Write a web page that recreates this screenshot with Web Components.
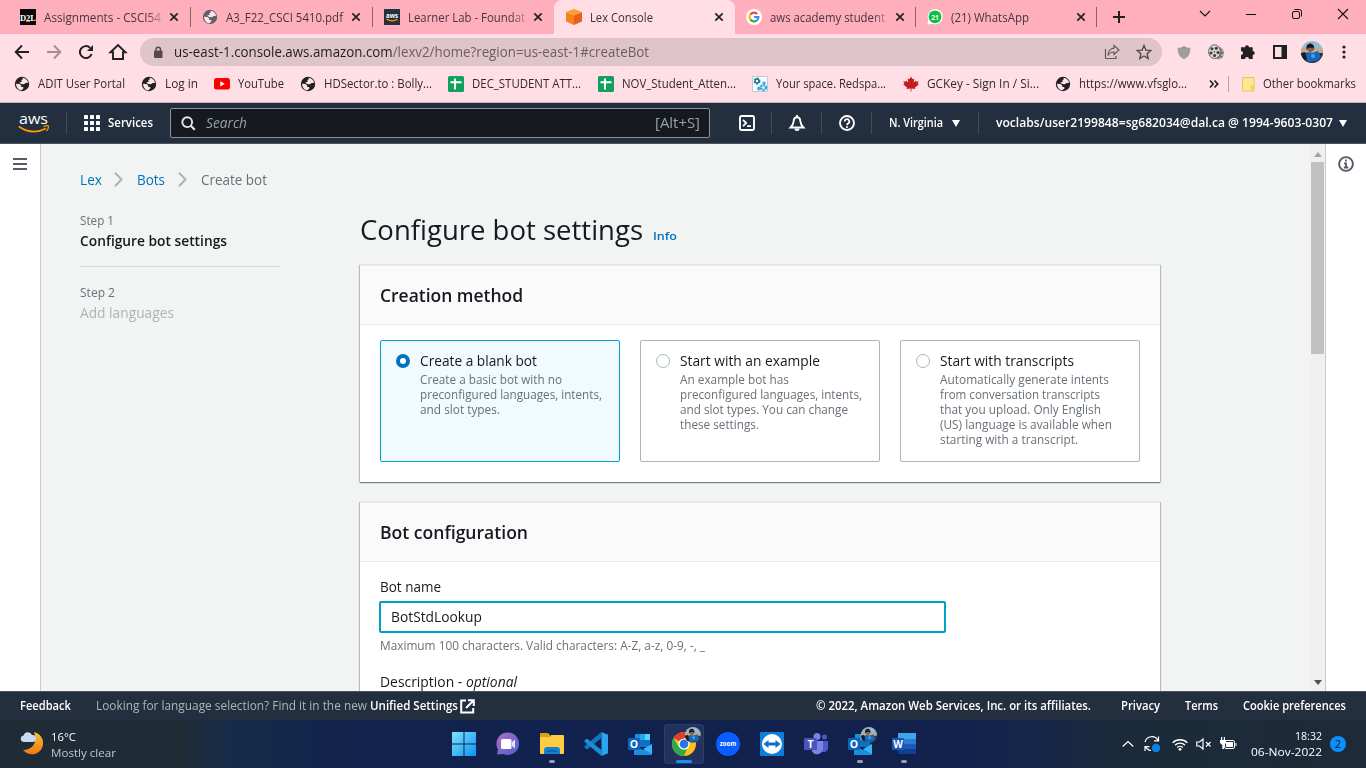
<!DOCTYPE html>
<html lang="en">
<head>
<meta charset="utf-8">
<title>Lex Console</title>
<style>
html,body{margin:0;height:100%;overflow:hidden;font-family:"Open Sans","Noto Sans",sans-serif}
</style>
</head>
<body>
<desktop-screen></desktop-screen>
<script>
const AVATAR = `<clipPath id="c"><circle cx="11" cy="11" r="11"/></clipPath><g clip-path="url(#c)"><rect width="22" height="22" fill="#8dbdd2"/><rect y="7" width="22" height="5" fill="#b8ab98"/><path d="M0 12h22v10H0z" fill="#2b2c30"/><path d="M5.500 8.500c-1-8 8.500-8 7.500 0z" fill="#17181b"/><path d="M6.500 5h6v4l-3 3-3-3z" fill="#8d5f48"/><path d="M5.800 4.800h7v2h-7z" fill="#15171b"/><path d="M6 11l5 1 6-2 3 6-4 4-8 1-5-3z" fill="#1569bd"/><path d="M0 12l4-1 2 7-3 3-3-3z" fill="#1a1c22"/><circle cx="12" cy="15" r="2" fill="#4c9fdc"/></g>`;
const GLOBE = c => `<circle cx="8" cy="8" r="7.200" fill="${c}"/><path d="M8.500 1.800c3.200.5 5 2.200 5.700 5l-2.500.1-1.800 1.400-2.700-.2-2-1.500 2.500-.9-.3-1.600 1.500-.8zM2 7.700l3.600.2 1.600 1.500-.2 1.300 1.900.4.800 1-2.200 2.200C4.300 14 2.200 11.500 2 7.700z" fill="#ffe3e8"/>`;
/* name: [width, height, viewBox, markup] */
const ICONS = {
 d2l:[16,16,'0 0 16 16','<rect width="16" height="16" fill="#0a0a0a"/><text x="0" y="11.500" font-family="Liberation Serif" font-weight="bold" font-size="8.500" textLength="16" lengthAdjust="spacingAndGlyphs" fill="#fff">D2L</text><path d="M6 12.500h4" stroke="#d9732c"/>'],
 globegray:[16,16,'0 0 16 16',GLOBE('#5f6368')],
 globe:[16,16,'0 0 16 16',GLOBE('#202124')],
 awsfav:[16,16,'0 0 16 16','<rect width="16" height="16" fill="#252f3e"/><text x="2" y="8.500" font-family="Open Sans" font-weight="bold" font-size="6.500" textLength="12" lengthAdjust="spacingAndGlyphs" fill="#fff">aws</text><path d="M2.500 10q5.500 3.500 11 .3" fill="none" stroke="#f90" stroke-width="1.200"/>'],
 lex:[16,16,'0 0 16 16','<path d="M8 0l8 3-8 3.500L0 3z" fill="#ff9d2d"/><path d="M0 3l8 3.500V16l-8-3.500z" fill="#f58220"/><path d="M16 3L8 6.500V16l8-3.500z" fill="#e8611c"/>'],
 google:[16,16,'0 0 16 16','<circle cx="8" cy="8" r="8" fill="#fff"/><g fill="none" stroke-width="2.200"><path d="M4.400 5.500A4.400 4.400 0 0 1 11.200 4.900" stroke="#ea4335"/><path d="M4.400 10.500A4.600 4.600 0 0 1 4.400 5.500" stroke="#fbbc05"/><path d="M11 11.200A4.400 4.400 0 0 1 4.400 10.500" stroke="#34a853"/><path d="M8 8h4.400a4.400 4.400 0 0 1-1.400 3.200" stroke="#4285f4"/></g>'],
 whats:[16,16,'0 0 17 17','<path d="M.5 16.500l1-5A8 8 0 1 1 6 15.600z" fill="#fff"/><circle cx="8.500" cy="8.300" r="6.800" fill="#0cc143"/><text x="4.500" y="11.200" font-family="Open Sans" font-weight="bold" font-size="7.500" textLength="8" lengthAdjust="spacingAndGlyphs" fill="#fff">21</text>'],
 tabx:[10,10,'0 0 10 10','<path d="M1.300 1.300l7.400 7.400M8.700 1.300L1.300 8.700" stroke="#202124" stroke-width="1.700"/>'],
 plus:[14,14,'0 0 14 14','<path d="M7 1v12M1 7h12" stroke="#202124" stroke-width="2"/>'],
 wchev:[12,8,'0 0 12 8','<path d="M1 1l5 5 5-5" fill="none" stroke="#111" stroke-width="1.100"/>'],
 wmin:[10,10,'0 0 10 10','<path d="M0 5.500h10" stroke="#111"/>'],
 wmax:[12,12,'0 0 12 12','<rect x="1.500" y="3.500" width="7" height="7" rx="1.500" fill="none" stroke="#111"/><path d="M3.500 1.500h5a2 2 0 0 1 2 2v5" fill="none" stroke="#111"/>'],
 wx:[12,12,'0 0 12 12','<path d="M1 1l10 10M11 1L1 11" stroke="#111" stroke-width="1.100"/>'],
 back:[16,16,'0 0 16 16','<path d="M15 8H2M8 1.500L1.700 8 8 14.500" fill="none" stroke="#202124" stroke-width="1.900"/>'],
 fwd:[16,16,'0 0 16 16','<path d="M1 8h13M8 1.500L14.300 8 8 14.500" fill="none" stroke="#a58e94" stroke-width="1.900"/>'],
 reload:[16,16,'0 0 16 16','<path d="M13.600 10A6 6 0 1 1 12 3.700" fill="none" stroke="#202124" stroke-width="2"/><path d="M15 1v6H9z" fill="#202124"/>'],
 home:[18,18,'0 0 18 18','<path d="M1.500 9.300L9 2l7.500 7.300H14V16H4V9.300z" fill="none" stroke="#202124" stroke-width="1.900"/>'],
 lock:[10,13,'0 0 10 13','<rect x="1" y="4.500" width="8.500" height="7.500" rx="1" fill="#55494d"/><path d="M3 5V3.500a2.200 2.200 0 0 1 4.500 0V5" fill="none" stroke="#55494d" stroke-width="1.400"/>'],
 share:[16,16,'0 0 16 16','<path d="M1.500 5v9.500H12V12" fill="none" stroke="#66585c" stroke-width="1.200"/><path d="M10 1.500L15 6l-5 4.500V8C7 8 5.300 9 4 11.500c0-4 2.500-7 6-7.300z" fill="none" stroke="#66585c" stroke-width="1.200"/>'],
 star:[16,16,'0 0 16 16','<path d="M8 1.600l1.900 4.500 4.900.4-3.700 3.200 1.100 4.800L8 12l-4.200 2.500 1.100-4.800L1.200 6.500l4.900-.4z" fill="none" stroke="#55494d" stroke-width="1.400"/>'],
 shield:[14,15,'0 0 14 15','<path d="M7 .8C9 2.500 11 2.800 13.300 2.800c.2 5.500-1.500 9-6.300 11.500C2.200 11.800.5 8.300.7 2.800 3 2.800 5 2.500 7 .8z" fill="#a39c9e"/>'],
 reel:[16,16,'0 0 16 16','<ellipse cx="11" cy="9" rx="4.800" ry="6.300" fill="#777"/><path d="M12 2.500l2.500 3M13.500 7h2M13 11h2.500M11 14.500l2-.5" stroke="#ddd"/><ellipse cx="6.500" cy="7.700" rx="5.900" ry="6.900" fill="#d9d9d9" stroke="#666"/><g fill="#3a3a3a"><circle cx="4" cy="4.800" r="1.500"/><circle cx="8.300" cy="4.300" r="1.500"/><circle cx="10" cy="8.500" r="1.500"/><circle cx="3" cy="9" r="1.500"/><circle cx="6.600" cy="11.600" r="1.500"/><circle cx="6.400" cy="7.700" r=".8"/></g>'],
 puzzle:[16,16,'0 0 16 16','<path d="M5 3.300a2 2 0 0 1 4 0h3.700V7a2 2 0 0 1 0 4v4H9a2 2 0 0 0-4 0H1v-4a2 2 0 0 0 0-4V3.300z" fill="#202124"/>'],
 panel:[14,14,'0 0 14 14','<path d="M1 1h12v12H1z" fill="none" stroke="#202124" stroke-width="2"/><path d="M8.500 1H13v12H8.500z" fill="#202124"/>'],
 avatar:[22,22,'0 0 22 22',AVATAR],
 dots:[4,14,'0 0 4 14','<circle cx="2" cy="2" r="1.600" fill="#202124"/><circle cx="2" cy="7" r="1.600" fill="#202124"/><circle cx="2" cy="12" r="1.600" fill="#202124"/>'],
 yt:[16,12,'0 0 16 12','<rect width="16" height="11.500" rx="2.500" fill="#f00"/><path d="M6.300 3.200v5.200l4.500-2.600z" fill="#fff"/>'],
 sheets:[16,16,'0 0 16 16','<rect width="16" height="16" rx="1.500" fill="#12a05c"/><path d="M7 2.500v11M2.500 6.300h11" stroke="#fff" stroke-width="2"/>'],
 redspace:[16,16,'0 0 16 16','<rect x=".5" y=".5" width="15" height="15" fill="#f6fbfd" stroke="#c3cbcf"/><circle cx="5" cy="5" r="2.300" fill="none" stroke="#1d7f9c" stroke-width="2.200" stroke-dasharray="1.600 .8"/><circle cx="5" cy="5" r="2" fill="none" stroke="#1d7f9c" stroke-width="1.300"/><circle cx="11.500" cy="11.500" r="2.500" fill="none" stroke="#39a9dc" stroke-width="2.500" stroke-dasharray="2 .7"/><circle cx="7" cy="12.500" r="2" fill="#47b0df"/><circle cx="12" cy="7" r="1.600" fill="#39a9dc"/>'],
 maple:[16,16,'0 0 16 16','<path d="M8 .5l1.600 2.800 1.700-.8-.6 4 2.200-2 .5 1.200 2.300-.4-1 2.500 1 .8-3.700 3 .4 1.400-4-.5V15.500h-.8v-3l-4 .5.400-1.400-3.700-3 1-.8-1-2.500 2.300.4.500-1.200 2.200 2-.6-4 1.700.8z" fill="#c41c1f"/>'],
 more:[10,10,'0 0 10 10','<path d="M1 1.500L4.200 5 1 8.500M5.500 1.500L8.700 5 5.500 8.500" fill="none" stroke="#202124" stroke-width="1.700"/>'],
 folder:[13,15,'0 0 13 15','<path d="M.5.500h11.500v9.500L9.500 14H.5z" fill="#ffe694" stroke="#e9c84e"/><path d="M9.500 9.500h2.500V14H9.500z" fill="#ffe075" stroke="#e9c84e"/>'],
 awslogo:[32,20,'0 0 32 20','<text x="1" y="11" font-family="Open Sans" font-weight="500" font-size="15" textLength="29" lengthAdjust="spacingAndGlyphs" fill="#fff">aws</text><path d="M.8 13.500Q14 22.500 28 15.500" fill="none" stroke="#f90" stroke-width="1.800"/><path d="M25.500 13.300q5-1.500 5 .2 0 2.500-2 4.500" fill="none" stroke="#f90" stroke-width="1.300"/>'],
 grid:[16,16,'0 0 16 16',[0,6,12].map(y=>[0,6,12].map(x=>`<rect x="${x}" y="${y}" width="4" height="4" rx=".6" fill="#fff"/>`).join('')).join('')],
 search:[15,15,'0 0 15 15','<circle cx="6.200" cy="6.200" r="4.900" fill="none" stroke="#e4e8e8" stroke-width="1.900"/><path d="M9.800 9.800l4 4" stroke="#e4e8e8" stroke-width="2.200"/>'],
 shell:[16,16,'0 0 16 16','<rect x="1" y="1" width="14" height="14" rx="1.500" fill="none" stroke="#fff" stroke-width="1.900"/><path d="M4 4.800L7.200 8 4 11.200M8 11.200h4" fill="none" stroke="#fff" stroke-width="1.800"/>'],
 bell:[16,17,'0 0 16 17','<path d="M8 0v2M1.600 12.500C3.500 10.500 4.500 9 4.700 6c.2-2.400 1.500-3.700 3.300-3.700S11.100 3.600 11.300 6c.2 3 1.200 4.500 3.100 6.500z" fill="none" stroke="#fff" stroke-width="1.900"/><path d="M5.500 13.500a2.500 2.500 0 0 0 5 0z" fill="#fff"/>'],
 help:[16,16,'0 0 16 16','<circle cx="8" cy="8" r="7" fill="none" stroke="#fff" stroke-width="1.900"/><path d="M5.700 6.500a2.300 2.300 0 1 1 3.400 2C8.300 9 8 9.300 8 10.200M8 11.200v1.700" fill="none" stroke="#fff" stroke-width="1.700"/>'],
 tri:[8,7,'0 0 8 7','<path d="M0 0h8L4 7z" fill="#fff"/>'],
 burger:[14,13,'0 0 14 13','<path d="M0 1h14M0 6h14M0 11h14" stroke="#545b64" stroke-width="2"/>'],
 info:[16,16,'0 0 16 16','<circle cx="8" cy="8" r="6.900" fill="none" stroke="#545b64" stroke-width="1.900"/><path d="M8 3.500v2M6 7.300h2v4M5.800 11.500h4.500" fill="none" stroke="#545b64" stroke-width="1.800"/>'],
 crumb:[9,15,'0 0 9 15','<path d="M1 .8l6.500 6.700L1 14.200" fill="none" stroke="#aab7b8" stroke-width="2"/>'],
 ext:[15,15,'0 0 15 15','<path d="M6 1.500H1.200v12h12V9" fill="none" stroke="#fff" stroke-width="2"/><path d="M8 1.200h5.800V7M13.500 1.500L6 9" fill="none" stroke="#fff" stroke-width="2"/>'],
 up:[8,5,'0 0 8 5','<path d="M0 5l4-5 4 5z" fill="#a3a3a3"/>'],
 down:[8,5,'0 0 8 5','<path d="M0 0h8L4 5z" fill="#505050"/>'],
 weather:[24,28,'0 0 24 28','<defs><linearGradient id="m" x2="0" y2="1"><stop stop-color="#fbc02d"/><stop offset="1" stop-color="#f07818"/></linearGradient></defs><path d="M14 2c8 2 11 10 8 16-4 8-14 8-19 2 9 0 15-7 11-18z" fill="url(#m)"/><path d="M3.500 12a3.300 3.300 0 0 1 0-6.500A4.500 4.500 0 0 1 12 5a3.500 3.500 0 0 1 1 7z" fill="#c9daf6"/>'],
 win:[24,24,'0 0 24 24','<defs><linearGradient id="w" x2="1" y2="1"><stop stop-color="#7fe3fb"/><stop offset="1" stop-color="#0a93f5"/></linearGradient></defs><path d="M0 0h11.500v11.500H0zM12.500 0H24v11.500H12.500zM0 12.500h11.500V24H0zM12.500 12.500H24V24H12.500z" fill="url(#w)"/>'],
 chat:[24,24,'0 0 24 24','<defs><linearGradient id="h" x2="1" y2="1"><stop stop-color="#b06fc0"/><stop offset="1" stop-color="#4b5fd3"/></linearGradient></defs><path d="M1 22.500l1-5A11.300 11.300 0 1 1 7 22z" fill="url(#h)"/><rect x="5" y="7" width="10.500" height="10" rx="1.500" fill="#fff"/><path d="M16 10l3-2.500v9L16 14z" fill="#e6e0fa"/>'],
 files:[24,24,'0 0 24 24','<path d="M0 2a1 1 0 0 1 1-1h7l2 2v3H0z" fill="#e0a20c"/><path d="M0 5h10l1-2h12a1 1 0 0 1 1 1v17a1 1 0 0 1-1 1H1a1 1 0 0 1-1-1z" fill="#fdcc42"/><path d="M4 22v-4a3 3 0 0 1 3-3h10a3 3 0 0 1 3 3v4z" fill="#1483cf"/><path d="M7 19h10" stroke="#0b61a4" stroke-width="1.500"/>'],
 code:[24,24,'0 0 24 24','<path d="M17.500 0L24 2.800v18.400L17.500 24z" fill="#2aa5ef"/><path d="M17.500 0v6L3 17.500.5 15.800v-1.500z" fill="#1277c0"/><path d="M17.500 24v-6L3 6.500.5 8.200v1.500z" fill="#1b8ed8"/>'],
 outlook:[24,24,'0 0 24 24','<path d="M7 2h15v13H7z" fill="#1490df"/><path d="M12 2h5v6h-5z" fill="#28a8ea"/><path d="M17 2h5v6h-5z" fill="#50d9ff"/><path d="M7 8h15v7H7z" fill="#0f6fc5"/><path d="M6 13l9 5 9-6v10a1 1 0 0 1-1 1H6z" fill="#1a8fe0"/><path d="M24 12v10l-9-5z" fill="#35b5f1"/><rect y="6" width="12" height="12" rx="1" fill="#0a64bb"/><text x="6" y="15.800" text-anchor="middle" font-family="Open Sans" font-weight="bold" font-size="10.500" fill="#fff">O</text>'],
 chrome:[24,24,'0 0 24 24','<circle cx="12" cy="12" r="12" fill="#fbc116"/><path d="M12 12L1.600 6A12 12 0 0 1 22.400 6H12z" fill="#e33b2e"/><path d="M12 24A12 12 0 0 1 1.600 6l5.200 9L12 18l3-1z" fill="#2da94f"/><circle cx="12" cy="12" r="5.600" fill="#fff"/><circle cx="12" cy="12" r="4.400" fill="#2b74e8"/>'],
 zoom:[24,24,'0 0 24 24','<circle cx="12" cy="12" r="12" fill="#0b5cff"/><text x="3.800" y="14" font-family="Open Sans" font-weight="bold" font-size="7" textLength="16.500" lengthAdjust="spacingAndGlyphs" fill="#fff">zoom</text>'],
 tv:[24,24,'0 0 24 24','<rect width="24" height="24" rx="1" fill="#0e7dda"/><circle cx="12" cy="12" r="10" fill="#fff"/><path d="M3.500 12l5-4v2.500h7V8l5 4-5 4v-2.500h-7V16z" fill="#0e6fcb"/>'],
 teams:[24,24,'0 0 24 24','<circle cx="20.500" cy="5" r="2.500" fill="#5059c9"/><circle cx="13" cy="4.500" r="3.500" fill="#7b83eb"/><path d="M16 9h8v7a4 4 0 0 1-6 3.500z" fill="#5059c9"/><path d="M8 9h11v7.500a6 6 0 0 1-11 3z" fill="#7b83eb"/><rect y="6" width="13" height="12" rx="1" fill="#4b53bc"/><text x="6.500" y="15.800" text-anchor="middle" font-family="Open Sans" font-weight="bold" font-size="10.500" fill="#fff">T</text>'],
 word:[24,24,'0 0 24 24','<path d="M6 1h18v6H6z" fill="#41a5ee"/><path d="M6 7h18v5H6z" fill="#2b7cd3"/><path d="M6 12h18v5H6z" fill="#185abd"/><path d="M6 17h18v5H6z" fill="#103f91"/><rect y="6" width="12" height="12" rx="1" fill="#1b57b5"/><text x="6" y="15.800" text-anchor="middle" font-family="Open Sans" font-weight="bold" font-size="10" fill="#fff">W</text>'],
 tup:[12,8,'0 0 12 8','<path d="M.7 6.500L6 1.500l5.300 5" fill="none" stroke="#fff" stroke-width="1.200"/>'],
 sync:[18,18,'0 0 18 18','<path d="M2 7a7 7 0 0 1 13-1.500M15.500 1.500v4.300H11M8 15.500a7 7 0 0 1-5.500-4M2 16v-4.300h4.500" fill="none" stroke="#fff" stroke-width="1.200"/><circle cx="13" cy="13" r="4.200" fill="#0c82e4"/>'],
 wifi:[16,13,'0 0 16 13','<g fill="none" stroke="#fff" stroke-width="1.300"><path d="M.6 4.800a10.500 10.500 0 0 1 14.800 0M3 7.300a7 7 0 0 1 10 0M5.200 9.500a4 4 0 0 1 5.600 0"/></g><circle cx="8" cy="11.300" r="1.400" fill="#fff"/>'],
 mute:[16,12,'0 0 16 12','<path d="M.8 4h2.700L7 1v10L3.500 8H.8z" fill="none" stroke="#fff" stroke-width="1.200"/><path d="M10 4l4.500 4.500M14.500 4L10 8.500" stroke="#fff" stroke-width="1.200"/>'],
 batt:[17,14,'0 0 17 14','<rect x="4.500" y="3.500" width="10" height="8" rx="1.500" fill="#1d2b38" stroke="#fff"/><path d="M6 5h7v5H6zM15.500 6h1v3h-1z" fill="#fff"/><path d="M0 3h6v2.500a3 3 0 0 1-2 2.300V12H2.300V7.800A3 3 0 0 1 0 5.500zM1 0h1.200v3H1zM3.800 0H5v3H3.800z" fill="#fff"/>']
};
const define = (tag, markup) => customElements.define(tag, class extends HTMLElement {
  constructor(){ super(); const t=document.createElement('template'); t.innerHTML=markup; this.attachShadow({mode:'open'}).append(t.content.cloneNode(true)); }
});

/* svg icon by name */
customElements.define('ui-icon', class extends HTMLElement {
  connectedCallback(){
    if(this.shadowRoot) return;
    const [w,h,v,m]=ICONS[this.getAttribute('name')];
    const s=+(this.getAttribute('scale')||1);
    this.attachShadow({mode:'open'}).innerHTML=`<style>:host{display:block;flex:none;width:${w*s}px;height:${h*s}px}svg{display:block;overflow:visible}</style><svg width="${w*s}" height="${h*s}" viewBox="${v}">${m}</svg>`;
  }
});

/* one line of text, condensed to the given width */
customElements.define('ui-text', class extends HTMLElement {
  connectedCallback(){
    if(this.shadowRoot) return;
    const w=+this.getAttribute('w');
    this.attachShadow({mode:'open'}).innerHTML=`<style>:host{display:block;flex:none;width:${w}px;white-space:pre}span{display:inline-block;transform-origin:0 50%}</style><span><slot></slot></span>`;
    const s=this.shadowRoot.querySelector('span'), n=s.offsetWidth;
    if(n) s.style.transform=`scaleX(${w/s.getBoundingClientRect().width})`;
  }
});

/* browser tab */
customElements.define('browser-tab', class extends HTMLElement {
  connectedCallback(){
    if(this.shadowRoot) return;
    this.attachShadow({mode:'open'}).innerHTML=`<style>
    :host{display:flex;align-items:center;height:34px;box-sizing:border-box;padding:0 11px 0 12px;position:relative;font-size:12px;color:#46363b}
    :host([active]){background:#ffdfe5;border-radius:8px 8px 0 0;color:#3c3034;margin-right:-1px}
    :host([line])::after{content:"";position:absolute;right:0;top:7px;width:1px;height:20px;background:#8c6069}
    .t{margin-left:8px;flex:1;overflow:hidden}
    :host([fade]) .t{-webkit-mask:linear-gradient(90deg,#000 82%,transparent 98%)}
    </style><ui-icon name="${this.getAttribute('icon')}"></ui-icon><div class="t"><ui-text w="${this.getAttribute('w')}"><slot></slot></ui-text></div><ui-icon name="tabx"></ui-icon>`;
  }
});

define('browser-strip',`<style>
:host{display:flex;height:34px;background:#ffaebc}
.tabs{display:grid;grid-template-columns:183px 182px 181px 180px 182px 181px;padding-left:8px}
.tabs>:first-child{padding-right:12px}
.plus{padding:10px 0 0 15px;width:70px;box-sizing:border-box}
.win{display:grid;grid-template-columns:repeat(4,46px);height:28px;place-items:center;margin-left:auto}
</style><div class="tabs">
<browser-tab icon="d2l" w="117" line fade>Assignments - CSCI54</browser-tab>
<browser-tab icon="globegray" w="117" line style="padding:0 12px 0 11px">A3_F22_CSCI 5410.pdf</browser-tab>
<browser-tab icon="awsfav" w="117" fade style="padding-left:11px">Learner Lab - Foundat</browser-tab>
<browser-tab icon="lex" w="63" active>Lex Console</browser-tab>
<browser-tab icon="google" w="115" line fade>aws academy student</browser-tab>
<browser-tab icon="whats" w="78" line style="padding-left:11px">(21) WhatsApp</browser-tab>
</div><div class="plus"><ui-icon name="plus"></ui-icon></div>
<div class="win"><ui-icon name="wchev"></ui-icon><ui-icon name="wmin"></ui-icon><ui-icon name="wmax"></ui-icon><ui-icon name="wx"></ui-icon></div>`);

define('browser-toolbar',`<style>
:host{display:flex;align-items:center;height:36px;background:#ffdfe5;padding:0 6px}
.c{display:grid;grid-auto-flow:column;grid-auto-columns:32px;place-items:center}
.c.l{margin-right:6px}.c.r{margin-left:6px}
.url{flex:1;height:28px;border-radius:14px;background:#dfc4c9;display:flex;align-items:center;padding:0 10px 0 13px;font-size:14px;color:#6d5d62}
.url b{font-weight:400;color:#241c1f}
.url ui-text{margin:0 0 2px 11px}.url .share{margin-left:auto;margin-right:16px}
</style><div class="c l"><ui-icon name="back"></ui-icon><ui-icon name="fwd"></ui-icon><ui-icon name="reload"></ui-icon><ui-icon name="home"></ui-icon></div>
<div class="url"><ui-icon name="lock"></ui-icon><ui-text w="475"><b>us-east-1.console.aws.amazon.com</b>/lexv2/home?region=us-east-1#createBot</ui-text><ui-icon class="share" name="share"></ui-icon><ui-icon name="star"></ui-icon></div>
<div class="c r"><ui-icon name="shield"></ui-icon><ui-icon name="reel"></ui-icon><ui-icon name="puzzle"></ui-icon><ui-icon name="panel"></ui-icon><ui-icon name="avatar"></ui-icon><ui-icon name="dots"></ui-icon></div>`);

customElements.define('book-mark', class extends HTMLElement {
  connectedCallback(){
    if(this.shadowRoot) return;
    this.attachShadow({mode:'open'}).innerHTML=`<style>:host{display:flex;align-items:center;gap:8px}ui-text{margin-bottom:2px}</style><ui-icon name="${this.getAttribute('icon')}"></ui-icon><ui-text w="${this.getAttribute('w')}"><slot></slot></ui-text>`;
  }
});
define('bookmark-bar',`<style>
:host{display:flex;align-items:center;height:33px;box-sizing:border-box;background:#ffdfe5;border-bottom:1px solid #cbb5ba;padding:0 0 4px 14px;font-size:12px;color:#33282b}
.g{display:grid;grid-template-columns:127px 73px 86px 148px 150px 154px 151px 152px 154px;align-items:center}
.s{width:1px;height:16px;background:#c79ca4;margin:0 13px 0 9px}
book-mark{flex:none}
</style><div class="g">
<book-mark icon="globe" w="87">ADIT User Portal</book-mark><book-mark icon="globe" w="33">Log in</book-mark><book-mark icon="yt" w="46">YouTube</book-mark><book-mark icon="globe" w="108">HDSector.to : Bolly...</book-mark><book-mark icon="sheets" w="109">DEC_STUDENT ATT...</book-mark><book-mark icon="sheets" w="114">NOV_Student_Atten...</book-mark><book-mark icon="redspace" w="110">Your space. Redspa...</book-mark><book-mark icon="maple" w="112">GCKey - Sign In / Si...</book-mark><book-mark icon="globe" w="108">https://www.vfsglo...</book-mark></div>
<ui-icon name="more"></ui-icon><div class="s"></div><book-mark icon="folder" w="93">Other bookmarks</book-mark>`);

define('aws-header',`<style>
:host{display:flex;align-items:center;height:41px;box-sizing:border-box;background:#232f3e;border-bottom:1px solid #4a5562;padding-left:18px;color:#fff;font-size:12px;font-weight:600}
ui-text{margin-bottom:1px}
.d{width:1px;height:22px;background:#414d5c}
.box{width:540px;height:30px;box-sizing:border-box;border:1px solid #879596;border-radius:2px;background:#16191f;display:flex;align-items:center;padding:0 9px 0 10px;margin-left:17px;font-size:14px;font-weight:400;color:#95a3a5}
.box i{margin-left:10px}.box .k{margin-left:auto}
.ic{width:49px;display:grid;place-items:center}
</style><ui-icon name="awslogo"></ui-icon><div class="d" style="margin:0 17px 0 16px"></div><ui-icon name="grid"></ui-icon><ui-text w="45" style="margin-left:8px">Services</ui-text>
<div class="box"><ui-icon name="search"></ui-icon><i><ui-text w="41">Search</ui-text></i><ui-text class="k" w="45">[Alt+S]</ui-text></div>
<div class="ic" style="margin-left:12px"><ui-icon name="shell"></ui-icon></div><div class="d"></div><div class="ic"><ui-icon name="bell"></ui-icon></div><div class="d"></div><div class="ic"><ui-icon name="help"></ui-icon></div><div class="d"></div>
<ui-text w="54" style="margin:0 9px 1px 17px">N. Virginia</ui-text><ui-icon name="tri"></ui-icon><div class="d" style="margin:0 17px 0 18px"></div><ui-text w="337" style="margin-right:6px">voclabs/user2199848=sg682034@dal.ca @ 1994-9603-0307</ui-text><ui-icon name="tri"></ui-icon>`);

define('wizard-steps',`<style>
:host{display:block;width:200px;font-size:12px;color:#687078}
.s{line-height:18px}.n{font-size:14px;line-height:22px;color:#16191f;font-weight:650}
.n.off{font-weight:400;color:#aab7b8}
hr{border:0;border-top:1px solid #d5dbdb;margin:14px 0 17px}
</style><div class="s"><ui-text w="34">Step 1</ui-text></div><div class="n"><ui-text w="147">Configure bot settings</ui-text></div><hr><div class="s"><ui-text w="35">Step 2</ui-text></div><div class="n off"><ui-text w="94">Add languages</ui-text></div>`);

define('crumb-trail',`<style>
:host{display:flex;align-items:center;height:22px;font-size:14px;color:#687078}
a{color:#0073bb}
</style><a><ui-text w="22">Lex</ui-text></a><ui-icon name="crumb" style="margin:0 14px 0 12px"></ui-icon><a><ui-text w="28">Bots</ui-text></a><ui-icon name="crumb" style="margin:0 14px 0 13px"></ui-icon><ui-text w="66">Create bot</ui-text>`);

define('form-card',`<style>
:host{display:block;width:800px;background:#fff;border-top:1px solid #eaeded;box-shadow:0 1px 1px 0 rgba(0,28,36,.5),1px 0 1px 0 rgba(0,28,36,.18),-1px 0 1px 0 rgba(0,28,36,.18);box-sizing:border-box}
.h{height:59px;box-sizing:border-box;background:#fafafa;border-bottom:1px solid #eaeded;padding-left:20px;font-size:18px;font-weight:650;line-height:58px;color:#16191f}
</style><div class="h"><slot name="title"></slot></div><slot></slot>`);

define('option-tile',`<style>
:host{display:flex;box-sizing:border-box;width:240px;height:122px;border:1px solid #aab7b8;border-radius:2px;padding:10px 15px}
:host([checked]){background:#f1faff;border-color:#00a1c9}
.r{width:14px;height:14px;box-sizing:border-box;border:1px solid #aab7b8;border-radius:50%;background:#fff;margin:3px 10px 0 0;flex:none}
:host([checked]) .r{border:4.500px solid #0073bb}
.t{font-size:14px;line-height:20px;color:#16191f}.d{font-size:12px;line-height:15px;color:#687078;padding-top:1px}
</style><div class="r"></div><div><div class="t"><slot name="t"></slot></div><div class="d"><slot></slot></div></div>`);

define('lex-page',`<style>
:host{display:grid;grid-template-columns:40px 1fr 40px;height:547px;background:#fff}
.rail{padding:14px 0 0 13px}.rail.i{padding:12px 0 0 12px}
.mid{display:grid;grid-template-columns:1fr 15px;background:#f2f3f3;border:solid #c5cccc;border-width:0 1px;overflow:hidden}
.body{padding:24px 0 0 39px;height:547px;box-sizing:border-box;overflow:hidden}
.cols{display:flex;gap:80px;margin-top:22px}
main{margin-top:-1px}
h1{margin:0 0 11px;display:flex;align-items:baseline;gap:10px;font-size:28px;line-height:36px;font-weight:400;color:#16191f}
h1 .in{font-size:11.500px;font-weight:650;color:#0073bb}
.opts{display:flex;gap:20px;padding:15px 20px 20px}
form-card+form-card{margin-top:20px}
.f{padding:14px 20px 0;font-size:14px;line-height:22px;color:#16191f}
.inp{width:567px;height:32px;box-sizing:border-box;border:2px solid #00a1c9;border-radius:2px;margin:3px 0 2px -1px;padding-left:10px;line-height:28px}
.hint{font-size:12px;color:#687078;margin-bottom:14px}
.bar{background:#f0f0f0;display:flex;flex-direction:column;align-items:center;height:547px;padding:8px 0 6px;box-sizing:border-box}
.thumb{width:13px;height:192px;background:#c1c1c1;margin:5px 0 auto}
</style>
<div class="rail"><ui-icon name="burger"></ui-icon></div>
<div class="mid"><div class="body"><crumb-trail></crumb-trail><div class="cols"><wizard-steps></wizard-steps><main>
<h1><ui-text w="283">Configure bot settings</ui-text><ui-text class="in" w="24">Info</ui-text></h1>
<form-card><ui-text slot="title" w="143">Creation method</ui-text><div class="opts">
<option-tile checked><ui-text slot="t" w="117">Create a blank bot</ui-text><ui-text w="142">Create a basic bot with no</ui-text><ui-text w="182">preconfigured languages, intents,</ui-text><ui-text w="80">and slot types.</ui-text></option-tile>
<option-tile><ui-text slot="t" w="140">Start with an example</ui-text><ui-text w="109">An example bot has</ui-text><ui-text w="182">preconfigured languages, intents,</ui-text><ui-text w="168">and slot types. You can change</ui-text><ui-text w="79">these settings.</ui-text></option-tile>
<option-tile><ui-text slot="t" w="134">Start with transcripts</ui-text><ui-text w="169">Automatically generate intents</ui-text><ui-text w="160">from conversation transcripts</ui-text><ui-text w="161">that you upload. Only English</ui-text><ui-text w="172">(US) language is available when</ui-text><ui-text w="138">starting with a transcript.</ui-text></option-tile>
</div></form-card>
<form-card><ui-text slot="title" w="148">Bot configuration</ui-text><div class="f"><ui-text w="61">Bot name</ui-text><div class="inp"><ui-text w="91">BotStdLookup</ui-text></div><div class="hint"><ui-text w="325">Maximum 100 characters. Valid characters: A-Z, a-z, 0-9, -, _</ui-text></div><ui-text w="137">Description - <i>optional</i></ui-text></div></form-card>
</main></div></div>
<div class="bar"><ui-icon name="up"></ui-icon><div class="thumb"></div><ui-icon name="down"></ui-icon></div></div>
<div class="rail i"><ui-icon name="info"></ui-icon></div>`);

define('aws-footer',`<style>
:host{display:flex;align-items:center;height:29px;box-sizing:border-box;background:#232f3e;border-top:1px solid #4a5562;padding:0 20px;color:#fff;font-size:12px;font-weight:600}
ui-text{margin-bottom:1px}
.q{font-weight:400;color:#aab7b8;margin:0 3px 1px 25px}
</style><ui-text w="51">Feedback</ui-text><ui-text class="q" w="271">Looking for language selection? Find it in the new</ui-text><ui-text w="88" style="margin-right:2px">Unified Settings</ui-text><ui-icon name="ext"></ui-icon>
<ui-text w="275" style="margin-left:auto">© 2022, Amazon Web Services, Inc. or its affiliates.</ui-text><ui-text w="39" style="margin-left:30px">Privacy</ui-text><ui-text w="33" style="margin-left:25px">Terms</ui-text><ui-text w="103" style="margin-left:25px">Cookie preferences</ui-text>`);

customElements.define('task-app', class extends HTMLElement {
  connectedCallback(){
    if(this.shadowRoot) return;
    this.attachShadow({mode:'open'}).innerHTML=`<style>
    :host{display:grid;place-items:center;width:40px;height:40px;box-sizing:border-box;position:relative;border-radius:4px}
    :host([active]){background:#24315c;box-shadow:inset 0 0 0 1px #303c66}
    :host([run])::after,:host([active])::after{content:"";position:absolute;bottom:1px;left:17px;width:6px;height:3px;border-radius:2px;background:#9a9fae}
    :host([active])::after{left:12px;width:16px;background:#1593fb}
    .b{position:absolute;right:3px;top:3px}
    </style><ui-icon name="${this.getAttribute('icon')}"></ui-icon>${this.hasAttribute('badge')?'<ui-icon class="b" name="avatar" scale=".72"></ui-icon>':''}`;
  }
});
define('task-bar',`<style>
:host{display:grid;grid-template-columns:444px 1fr 244px;height:48px;align-items:center;font-size:11.500px;color:#fff;background:linear-gradient(90deg,#1f2c36 0,#1f2c36 180px,#162b47 225px,#12244c 330px,#11224f 500px,#12214c 950px,#15264a 1030px,#1b2a3a 1110px,#1d2b38 100%)}
.w{display:flex;align-items:center;padding:0 0 0 20px;gap:7px}
.w div{line-height:16px;padding-top:1px}.clk{line-height:16px}.w .m{color:#c3c7cb}
.apps{display:flex;gap:4px}
.tray{display:flex;align-items:center}
.clk{width:71px;margin-left:14px;display:flex;flex-direction:column;align-items:flex-end}
.n{width:16px;height:16px;border-radius:50%;background:#0a8ffb;color:#10202c;text-align:center;font-size:10.500px;line-height:16px;margin-left:8px}
</style><div class="w"><ui-icon name="weather"></ui-icon><div><ui-text w="25">16°C</ui-text><ui-text class="m" w="65">Mostly clear</ui-text></div></div>
<div class="apps"><task-app icon="win"></task-app><task-app icon="chat"></task-app><task-app icon="files" run></task-app><task-app icon="code"></task-app><task-app icon="outlook"></task-app><task-app icon="chrome" active badge></task-app><task-app icon="zoom"></task-app><task-app icon="tv"></task-app><task-app icon="teams"></task-app><task-app icon="outlook" run badge></task-app><task-app icon="word" run></task-app></div>
<div class="tray"><ui-icon name="tup"></ui-icon><ui-icon name="sync" style="margin-left:9px"></ui-icon><ui-icon name="wifi" style="margin-left:11px"></ui-icon><ui-icon name="mute" style="margin-left:8px"></ui-icon><ui-icon name="batt" style="margin-left:8px"></ui-icon><div class="clk"><ui-text w="27">18:32</ui-text><ui-text w="71">06-Nov-2022</ui-text></div><div class="n">2</div></div>`);

define('desktop-screen',`<style>:host{display:flex;flex-direction:column;width:1366px;height:768px;overflow:hidden}:host>*{flex:none}</style>
<browser-strip></browser-strip><browser-toolbar></browser-toolbar><bookmark-bar></bookmark-bar><aws-header></aws-header><lex-page></lex-page><aws-footer></aws-footer><task-bar></task-bar>`);
</script>
</body>
</html>
